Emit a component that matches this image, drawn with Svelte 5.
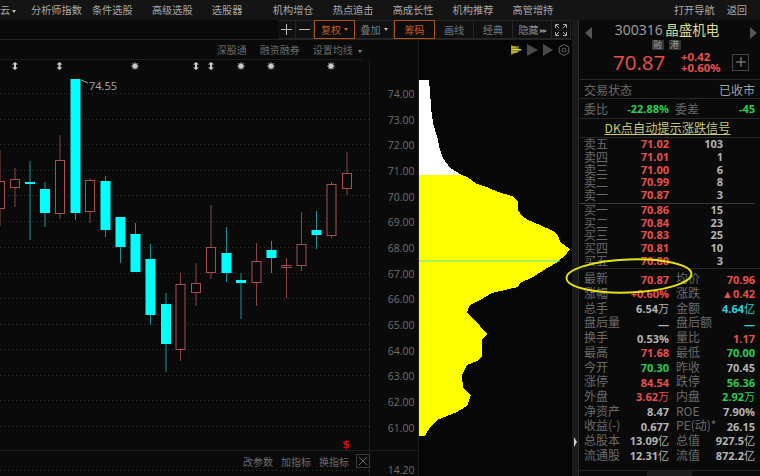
<script lang="ts">
  const menu = [
    { t: '分析师指数', gap: 10 }, { t: '条件选股', gap: 10 }, { t: '高级选股', gap: 19.2 }, { t: '选股器', gap: 19.2 },
    { t: '机构增仓', gap: 30.4 }, { t: '热点追击', gap: 19.2 }, { t: '高成长性', gap: 19.2 }, { t: '机构推荐', gap: 19.2 }, { t: '高管增持', gap: 19.2 },
  ];

  // x, wick top, wick bottom, body top, body bottom, up?
  const candles = [
    [0, 150, 226, 181, 208, 1], [15, 168, 207, 179, 187, 1], [30, 161, 240, 182, 184, 0], [45, 182, 227, 189, 213, 0],
    [60, 135, 219, 160, 213, 1], [75.5, 79, 220, 79, 213, 0], [90, 178, 223, 180, 211, 1], [105.5, 176, 237, 181, 230, 0],
    [120.5, 217, 263, 217, 247, 0], [135.5, 223, 272, 234, 272, 0], [150.5, 244, 325, 259, 315, 0], [166, 293, 372, 304, 344, 0],
    [180.5, 273, 361, 284, 349, 1], [196, 263, 306, 283, 292, 1], [211, 205, 279, 247, 272, 1], [226.5, 227, 282, 253, 273, 0],
    [241, 273, 319, 280, 283, 0], [256.5, 243, 306, 261, 282, 1], [271.5, 241, 273, 250, 258, 0], [286.5, 258, 298, 265, 267, 1],
    [301.5, 212, 271, 244, 265, 1], [316.5, 211, 249, 230, 235, 0], [331.5, 182, 238, 184, 235, 1], [347, 152, 195, 173, 188, 1],
  ];

  const gridY = [93, 119, 144, 170, 195, 221, 247, 273, 298, 324, 349, 375, 400, 426, 470];
  const prices = ['74.00', '73.00', '72.00', '71.00', '70.00', '69.00', '68.00', '67.00', '66.00', '65.00', '64.00', '63.00', '62.00', '61.00'];
  const arrows = [15, 59.5, 196, 211];
  const suns = [135, 241, 271, 331];
  const rays = [0, 45, 90, 135, 180, 225, 270, 315];

  const whitePts = '419,80 429,80 431.5,112 433,123 438,140 440,150 443,158 450,168 462,175 419,175';
  const yellowPts = '419,175 462,175 467,177 477,184 487,187 498,192 512,196 518,202 518,210 522,216 528,220 540,225 553,231 558,235 560,242 570,249 565,256 559,260 558,262 547,268 533,277 520,283 518,287 492,293 480,300 470,305 467,312 473,319 480,326 487,334 482,340 482,357 477,361 467,365 462,375 463,388 471,395 467,406 457,412 437,420 430,427 425,436 419,436';

  const sells = [['卖五', '71.02', '103'], ['卖四', '71.01', '1'], ['卖三', '71.00', '6'], ['卖二', '70.99', '8'], ['卖一', '70.87', '3']];
  const buys = [['买一', '70.86', '15'], ['买二', '70.84', '23'], ['买三', '70.83', '25'], ['买四', '70.81', '10'], ['买五', '70.80', '3']];

  // label, value, class, unit, label, value, class, unit
  const stats = [
    ['最新', '70.87', 'r', '', '均价', '70.96', 'r', ''],
    ['涨幅', '+0.60%', 'r', '', '涨跌', '▲0.42', 'r', ''],
    ['总手', '6.54', 'w', '万', '金额', '4.64', 'c', '亿'],
    ['盘后量', '—', 'w', '', '盘后额', '—', 'c', ''],
    ['换手', '0.53%', 'w', '', '量比', '1.17', 'r', ''],
    ['最高', '71.68', 'r', '', '最低', '70.00', 'g', ''],
    ['今开', '70.30', 'g', '', '昨收', '70.45', 'w', ''],
    ['涨停', '84.54', 'r', '', '跌停', '56.36', 'g', ''],
    ['外盘', '3.62', 'r', '万', '内盘', '2.92', 'g', '万'],
    ['净资产', '8.47', 'w', '', 'ROE', '7.90%', 'w', ''],
    ['收益(-)', '0.677', 'w', '', 'PE(动)*', '26.15', 'w', ''],
    ['总股本', '13.09', 'w', '亿', '总值', '927.5', 'w', '亿'],
    ['流通股', '12.31', 'w', '亿', '流值', '872.2', 'w', '亿'],
  ];
</script>

<div class="app">
  <div class="menu">
    <span class="first">云 <i class="caret"></i></span>
    {#each menu as m}
      <span style="margin-left:{m.gap}px">{m.t}</span>
    {/each}
    <span class="push">打开导航</span>
    <span class="back">返回</span>
  </div>

  <div class="main">
    <div class="left">
      <div class="toolbar">
        <button class="sq"><svg width="11" height="11" viewBox="0 0 11 11"><path d="M5.5 0v11M0 5.5h11" stroke="#bbb" /></svg></button>
        <button class="sq"><svg width="11" height="11" viewBox="0 0 11 11"><path d="M0 5.5h11" stroke="#bbb" /></svg></button>
        <button class="tb on w40">复权 <i class="caret orange"></i></button>
        <button class="tb w38">叠加 <i class="caret"></i></button>
        <button class="tb on w40">筹码</button>
        <button class="tb w38">画线</button>
        <button class="tb w38">经典</button>
        <button class="tb w38 hide">隐藏 <span class="ff">▸▸</span></button>
        <button class="sq full">
          <svg width="12" height="12" viewBox="0 0 12 12" fill="none" stroke="#aaa"><path d="M.5 4V.5H4M8 .5h3.5V4M11.5 8v3.5H8M4 11.5H.5V8M1 1l3 3M11 1 8 4M11 11 8 8M1 11l3-3" /></svg>
        </button>
      </div>

      <div class="subhead">
        <div class="links">
          <span>深股通</span>
          <span>融资融券</span>
          <span>设置均线 <i class="caret small"></i></span>
        </div>
        <div class="axis-gap"></div>
        <div class="chip-tools">
          <svg width="11" height="12" viewBox="0 0 11 12"><path d="M0 1l11 5-11 5z" fill="#8a8a2a" /><path d="M0 3h8M0 5.5h10M0 8h7" stroke="#d8d820" /></svg>
          <svg width="11" height="12" viewBox="0 0 11 12"><path d="M0 0l11 6-11 6z" fill="#4a4a4a" /></svg>
          <svg width="10" height="12" viewBox="0 0 10 12"><path d="M0 0l10 6-10 6z" fill="#4a4a4a" /></svg>
          <svg width="12" height="12" viewBox="0 0 12 12" fill="none" stroke="#666"><path d="M6 .5 10.8 3.2v5.6L6 11.5 1.2 8.8V3.2z" /><circle cx="6" cy="6" r="2" /></svg>
        </div>
      </div>

      <div class="plot">
        <svg class="canvas" width="572" height="416" viewBox="0 60 572 416">
          <rect x="419" y="60" width="153" height="416" fill="#050505" />
          {#each gridY as y}
            <line x1="0" x2="372" y1={y + 0.5} y2={y + 0.5} class="grid" />
          {/each}
          <line x1="369.5" x2="369.5" y1="60" y2="476" class="vline" />
          <line x1="418.5" x2="418.5" y1="60" y2="476" class="vline" />
          <line x1="0" x2="418" y1="450.5" y2="450.5" class="vline" />

          {#each arrows as x}
            <path d="M{x} 62l3 2.5h-2v3h2l-3 2.5-3-2.5h2v-3h-2z" fill="#ccc" />
          {/each}
          {#each suns as x}
            <circle cx={x} cy="66" r="2.6" fill="#ccc" />
            {#each rays as a}
              <line x1={x} y1="62.3" x2={x} y2="63.8" stroke="#aaa" transform="rotate({a} {x} 66)" />
            {/each}
          {/each}

          {#each candles as [x, wt, wb, bt, bb, up]}
            <line x1={x} x2={x} y1={wt} y2={wb} stroke={up ? '#8a4444' : '#1f8f94'} />
            {#if up}
              <rect x={x - 4.5} y={bt + 0.5} width="9" height={bb - bt} class="up" />
            {:else}
              <rect x={x - 5} y={bt} width="10" height={Math.max(bb - bt, 2)} fill="#00ffff" />
            {/if}
          {/each}

          <path d="M81 80l7 3" stroke="#aaa" fill="none" />
          <text x="89" y="90" class="peak">74.55</text>
          <text x="346" y="448" class="dollar">$</text>

          {#each prices as p, i}
            <text x="414.5" y={98 + i * 25.68} class="price">{p}</text>
          {/each}
          <text x="414.5" y="474" class="price">14.20</text>

          <polygon points={whitePts} fill="#fff" shape-rendering="crispEdges" />
          <polygon points={yellowPts} fill="#ffff00" shape-rendering="crispEdges" />
          <line x1="419" x2="560" y1="261" y2="261" stroke="#4fe6b8" />
        </svg>

        <div class="indicators">
          <span>改参数</span>
          <span>加指标</span>
          <span>换指标</span>
          <span class="close"><svg width="8" height="8" viewBox="0 0 8 8"><path d="M0 0l8 8M8 0 0 8" stroke="#666" /></svg></span>
        </div>
      </div>
    </div>

    <div class="strip"><i class="grip"></i></div>

    <div class="side">
      <div class="quote">
        <i class="tri left-tri"></i>
        <div class="title"><span class="code">300316</span> <span class="name">晶盛机电</span></div>
        <i class="tri right-tri"></i>
        <div class="badges"><span>融</span><span>港</span></div>
        <div class="nums">
          <span class="big">70.87</span>
          <span class="chg">+0.42<br />+0.60%</span>
          <span class="plus"><svg width="10" height="10" viewBox="0 0 10 10"><path d="M5 0v10M0 5h10" stroke="#999" /></svg></span>
        </div>
      </div>

      <div class="line status"><span>交易状态</span><span class="closed">已收市</span></div>
      <div class="line ratio">
        <span>委比</span><b class="g v1">-22.88%</b><span class="l2">委差</span><b class="g v2">-45</b>
      </div>
      <div class="line dk">DK点自动提示涨跌信号</div>

      <div class="book sell">
        {#each sells as [l, p, q]}
          <div class="lvl"><span>{l}</span><b class="r">{p}</b><b class="w">{q}</b></div>
        {/each}
      </div>
      <div class="book buy">
        {#each buys as [l, p, q]}
          <div class="lvl"><span>{l}</span><b class="r">{p}</b><b class="w">{q}</b></div>
        {/each}
      </div>

      <div class="stats">
        {#each stats as [l1, v1, c1, u1, l2, v2, c2, u2]}
          <div class="stat">
            <span>{l1}</span><b class={c1}>{v1}<em>{u1}</em></b>
            <span class="l2">{l2}</span><b class={c2}>{v2}<em>{u2}</em></b>
          </div>
        {/each}
      </div>
      <div class="handle"><i></i></div>

      <svg class="ring" width="134" height="42" viewBox="0 0 134 42">
        <ellipse cx="67" cy="21" rx="62.5" ry="16.5" fill="none" stroke="#e4e410" stroke-width="2" transform="rotate(-2 67 21)" />
      </svg>
    </div>
  </div>
</div>

<style>
  :global(body) {
    margin: 0;
    background: #0a0a0a;
    overflow: hidden;
  }

  .app {
    width: 760px;
    height: 476px;
    overflow: hidden;
    color: #9a9a9a;
    font-family: 'Noto Sans CJK SC', 'Noto Sans', sans-serif;
    font-size: 10px;
    display: flex;
    flex-direction: column;
  }

  .menu {
    height: 20px;
    flex-shrink: 0;
    background: #141414;
    display: flex;
    align-items: center;
    color: #a8a8a8;
    font-size: 10.2px;
    line-height: 20px;
    white-space: nowrap;
  }

  .first {
    width: 21px;
  }

  .push {
    margin-left: auto;
  }

  .back {
    margin: 0 13px 0 12px;
  }

  .caret {
    display: inline-block;
    width: 0;
    height: 0;
    border: 2.5px solid transparent;
    border-top: 3px solid #bbb;
    border-bottom: 0;
    vertical-align: middle;
  }

  .caret.orange {
    border-top-color: #d06a20;
  }

  .caret.small {
    border-top-color: #888;
    margin-left: 3px;
  }

  .main {
    flex: 1;
    display: flex;
    min-height: 0;
  }

  .left {
    width: 572px;
    display: flex;
    flex-direction: column;
  }

  .toolbar {
    height: 19px;
    padding-left: 278px;
    display: flex;
    border-bottom: 1px solid #222;
  }

  button {
    height: 19px;
    padding: 0;
    margin: 0;
    font: inherit;
    font-size: 10px;
    color: #7a7a7a;
    background: #101010;
    border: 1px solid #262626;
    border-left: 0;
    display: flex;
    align-items: center;
    justify-content: center;
    gap: 3px;
    box-sizing: border-box;
  }

  .sq {
    width: 18px;
  }

  .full {
    width: 19px;
  }

  .w38 {
    width: 39px;
  }

  .w40 {
    width: 41px;
  }

  .on {
    color: #c8601c;
    border: 1px solid #a85618;
    background: #0c0c0c;
  }

  .hide {
    gap: 1px;
    color: #8a8a8a;
  }

  .ff {
    font-size: 8px;
    letter-spacing: -1px;
  }

  .subhead {
    height: 20px;
    flex-shrink: 0;
    display: flex;
  }

  .links {
    width: 362px;
    box-sizing: border-box;
    display: flex;
    justify-content: flex-end;
    gap: 13px;
    align-items: center;
    color: #6c6c6c;
    border-bottom: 1px solid #1e1e1e;
  }

  .axis-gap {
    width: 56px;
    border-right: 1px solid #1c1c1c;
  }

  .chip-tools {
    flex: 1;
    display: flex;
    justify-content: flex-end;
    align-items: center;
    gap: 5px;
    padding-right: 2px;
    background: #050505;
  }

  .plot {
    position: relative;
    flex: 1;
    min-height: 0;
  }

  .canvas {
    display: block;
  }

  .grid {
    stroke: #333;
    stroke-dasharray: 1 3;
  }

  .vline {
    stroke: #1e1e1e;
  }

  .up {
    fill: #0a0a0a;
    stroke: #a85050;
  }

  .peak {
    font: 11px 'Open Sans', sans-serif;
    fill: #aaa;
  }

  .dollar {
    font: bold 11px 'DejaVu Sans', sans-serif;
    fill: #d01010;
    text-anchor: middle;
  }

  .price {
    font: 10.5px 'Open Sans', sans-serif;
    fill: #6e6e6e;
    text-anchor: end;
  }

  .indicators {
    position: absolute;
    top: 391px;
    left: 243px;
    width: 127px;
    height: 20px;
    display: flex;
    gap: 8px;
    align-items: center;
    color: #6a6a6a;
  }

  .close {
    width: 12px;
    height: 12px;
    border: 1px solid #3a3a3a;
    display: flex;
    align-items: center;
    justify-content: center;
    margin-left: -1px;
  }

  .strip {
    width: 7px;
    background: #1a1a1a;
    border-right: 1px solid #2a2a2a;
    box-sizing: border-box;
    position: relative;
  }

  .grip {
    position: absolute;
    left: 2px;
    top: 417px;
    border: 5px solid transparent;
    border-left: 3px solid #ccc;
    border-right: 0;
  }

  .side {
    position: relative;
    flex: 1;
    padding-left: 1px;
    color: #6a6a6a;
    font-size: 12px;
  }

  .quote {
    position: relative;
    height: 59px;
    border-bottom: 1px solid #262626;
  }

  .tri {
    position: absolute;
    top: 7px;
    border: 6px solid transparent;
  }

  .left-tri {
    left: 5px;
    border-right: 7px solid #555;
    border-left: 0;
  }

  .right-tri {
    right: 3px;
    border-left: 7px solid #555;
    border-right: 0;
  }

  .title {
    height: 18px;
    line-height: 18px;
    text-align: center;
    margin-right: 26px;
    margin-left: 20px;
    white-space: nowrap;
  }

  .code {
    font: 14px 'Open Sans', sans-serif;
    color: #a0a0a0;
  }

  .name {
    font-size: 13.5px;
    color: #dcdc96;
  }

  .badges {
    display: flex;
    justify-content: center;
    gap: 5px;
    margin: 2px 0 0 -8px;
    height: 10px;
  }

  .badges span {
    width: 12px;
    height: 10px;
    line-height: 10px;
    font-size: 9px;
    text-align: center;
    background: #333;
    color: #999;
  }

  .nums {
    display: flex;
    align-items: center;
    height: 24px;
  }

  .big {
    margin-left: 33px;
    font: 500 20.5px 'Open Sans', sans-serif;
    color: #e8504e;
    width: 68px;
  }

  .chg {
    font: bold 11.4px/11px 'Open Sans', sans-serif;
    color: #e8504e;
    width: 51px;
  }

  .plus {
    width: 15px;
    height: 15px;
    border: 1px solid #444;
    display: flex;
    align-items: center;
    justify-content: center;
  }

  .line {
    display: flex;
    height: 19px;
    align-items: center;
    padding: 0 5px 0 4px;
    border-bottom: 1px solid #262626;
  }

  .status {
    height: 18px;
    justify-content: space-between;
  }

  .closed {
    color: #a0a0a0;
  }

  .ratio span:first-child {
    width: 24px;
  }

  .ratio .v1 {
    width: 61px;
    text-align: right;
    flex: none;
  }

  .ratio .l2 {
    margin-left: 6px;
  }

  .v2 {
    margin-left: auto;
  }

  .dk {
    justify-content: center;
    color: #c8c878;
    text-decoration: underline;
    font-size: 12.2px;
    padding: 0 5px 1px 0;
    height: 17px;
  }

  b {
    font: bold 11px 'Open Sans', sans-serif;
    white-space: nowrap;
  }

  b em {
    font: normal 11px 'Noto Sans CJK SC', sans-serif;
  }

  .r {
    color: #e8504e;
  }

  .g {
    color: #2ecc52;
  }

  .c {
    color: #2fd4e0;
  }

  .w {
    color: #b4b4b4;
  }

  .book {
    padding-left: 4px;
    margin-right: 5px;
  }

  .sell {
    border-bottom: 1px solid #3a3a3a;
    padding-bottom: 1px;
  }

  .buy {
    height: 64px;
    border-bottom: 1px solid #262626;
    margin-right: 0;
  }

  .lvl {
    display: grid;
    height: 12.75px;
    line-height: 12.75px;
    grid-template-columns: 36px 49px 54px;
    align-items: center;
  }

  .lvl b {
    text-align: right;
    line-height: 12.75px;
  }

  .stats {
    padding: 2px 5px 0 4px;
  }

  .stat {
    display: grid;
    grid-template-columns: 36px 49px 7px 34px 1fr;
    height: 14.7px;
    line-height: 14.7px;
    align-items: center;
    white-space: nowrap;
  }

  .stat b {
    text-align: right;
  }

  .stat .l2 {
    grid-column: 4;
  }

  .handle {
    position: absolute;
    left: 0;
    right: 0;
    top: 450px;
    border-top: 1px solid #222;
    display: flex;
    justify-content: center;
  }

  .handle i {
    width: 45px;
    height: 5px;
    background: #1c1c1c;
  }

  .ring {
    position: absolute;
    left: -17px;
    top: 235px;
    pointer-events: none;
  }
</style>
